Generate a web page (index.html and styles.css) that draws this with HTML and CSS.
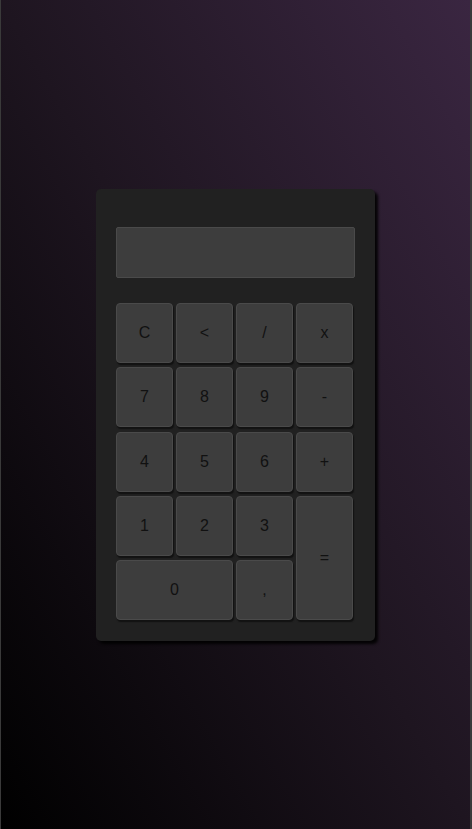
FILE: index.html
```html
<!DOCTYPE html>
<html>
<head>
<meta charset="utf-8">
<link rel="stylesheet" href="styles.css">
</head>
<body>
<div class="page">
  <div class="calc">
    <div class="display"></div>
    <div class="keys">
      <button class="key">C</button>
      <button class="key">&lt;</button>
      <button class="key">/</button>
      <button class="key">x</button>
      <button class="key">7</button>
      <button class="key">8</button>
      <button class="key">9</button>
      <button class="key">-</button>
      <button class="key">4</button>
      <button class="key">5</button>
      <button class="key">6</button>
      <button class="key">+</button>
      <button class="key">1</button>
      <button class="key">2</button>
      <button class="key">3</button>
      <button class="key key-eq">=</button>
      <button class="key key-zero">0</button>
      <button class="key key-dot">,</button>
    </div>
  </div>
</div>
</body>
</html>
```
FILE: styles.css
```css
html, body {
  margin: 0;
  padding: 0;
  height: 100%;
}
body {
  background: #3a3a3a;
  font-family: "Liberation Sans", Arial, sans-serif;
}
.page {
  height: 829px;
  margin: 0 2px 0 1px;
  background: linear-gradient(to bottom left, #3a2641 0%, #1e1520 50%, #000000 100%);
  display: flex;
  justify-content: center;
  padding-top: 189px;
  box-sizing: border-box;
}
.calc {
  width: 279px;
  height: 452px;
  box-sizing: border-box;
  padding: 38px 20px 0 20px;
  background: #212121;
  border-radius: 5px;
  box-shadow: 3px 3px 3px rgba(0,0,0,0.9);
}
.display {
  height: 51px;
  box-sizing: border-box;
  background: #3d3d3d;
  border: 1px solid #4a4a4a;
  border-radius: 2px;
  margin-bottom: 25px;
}
.keys {
  display: grid;
  grid-template-columns: repeat(4, 57px);
  grid-auto-rows: 60px;
  column-gap: 3px;
  row-gap: 4.25px;
}
.key {
  background: #3d3d3d;
  border: 1px solid #4a4a4a;
  border-radius: 4px;
  box-shadow: 1px 2px 1px #121212;
  color: #111;
  font-family: "Liberation Sans", Arial, sans-serif;
  font-size: 16px;
  padding: 0;
}
.key-eq {
  grid-row: span 2;
}
.key-zero {
  grid-column: span 2;
}
```
